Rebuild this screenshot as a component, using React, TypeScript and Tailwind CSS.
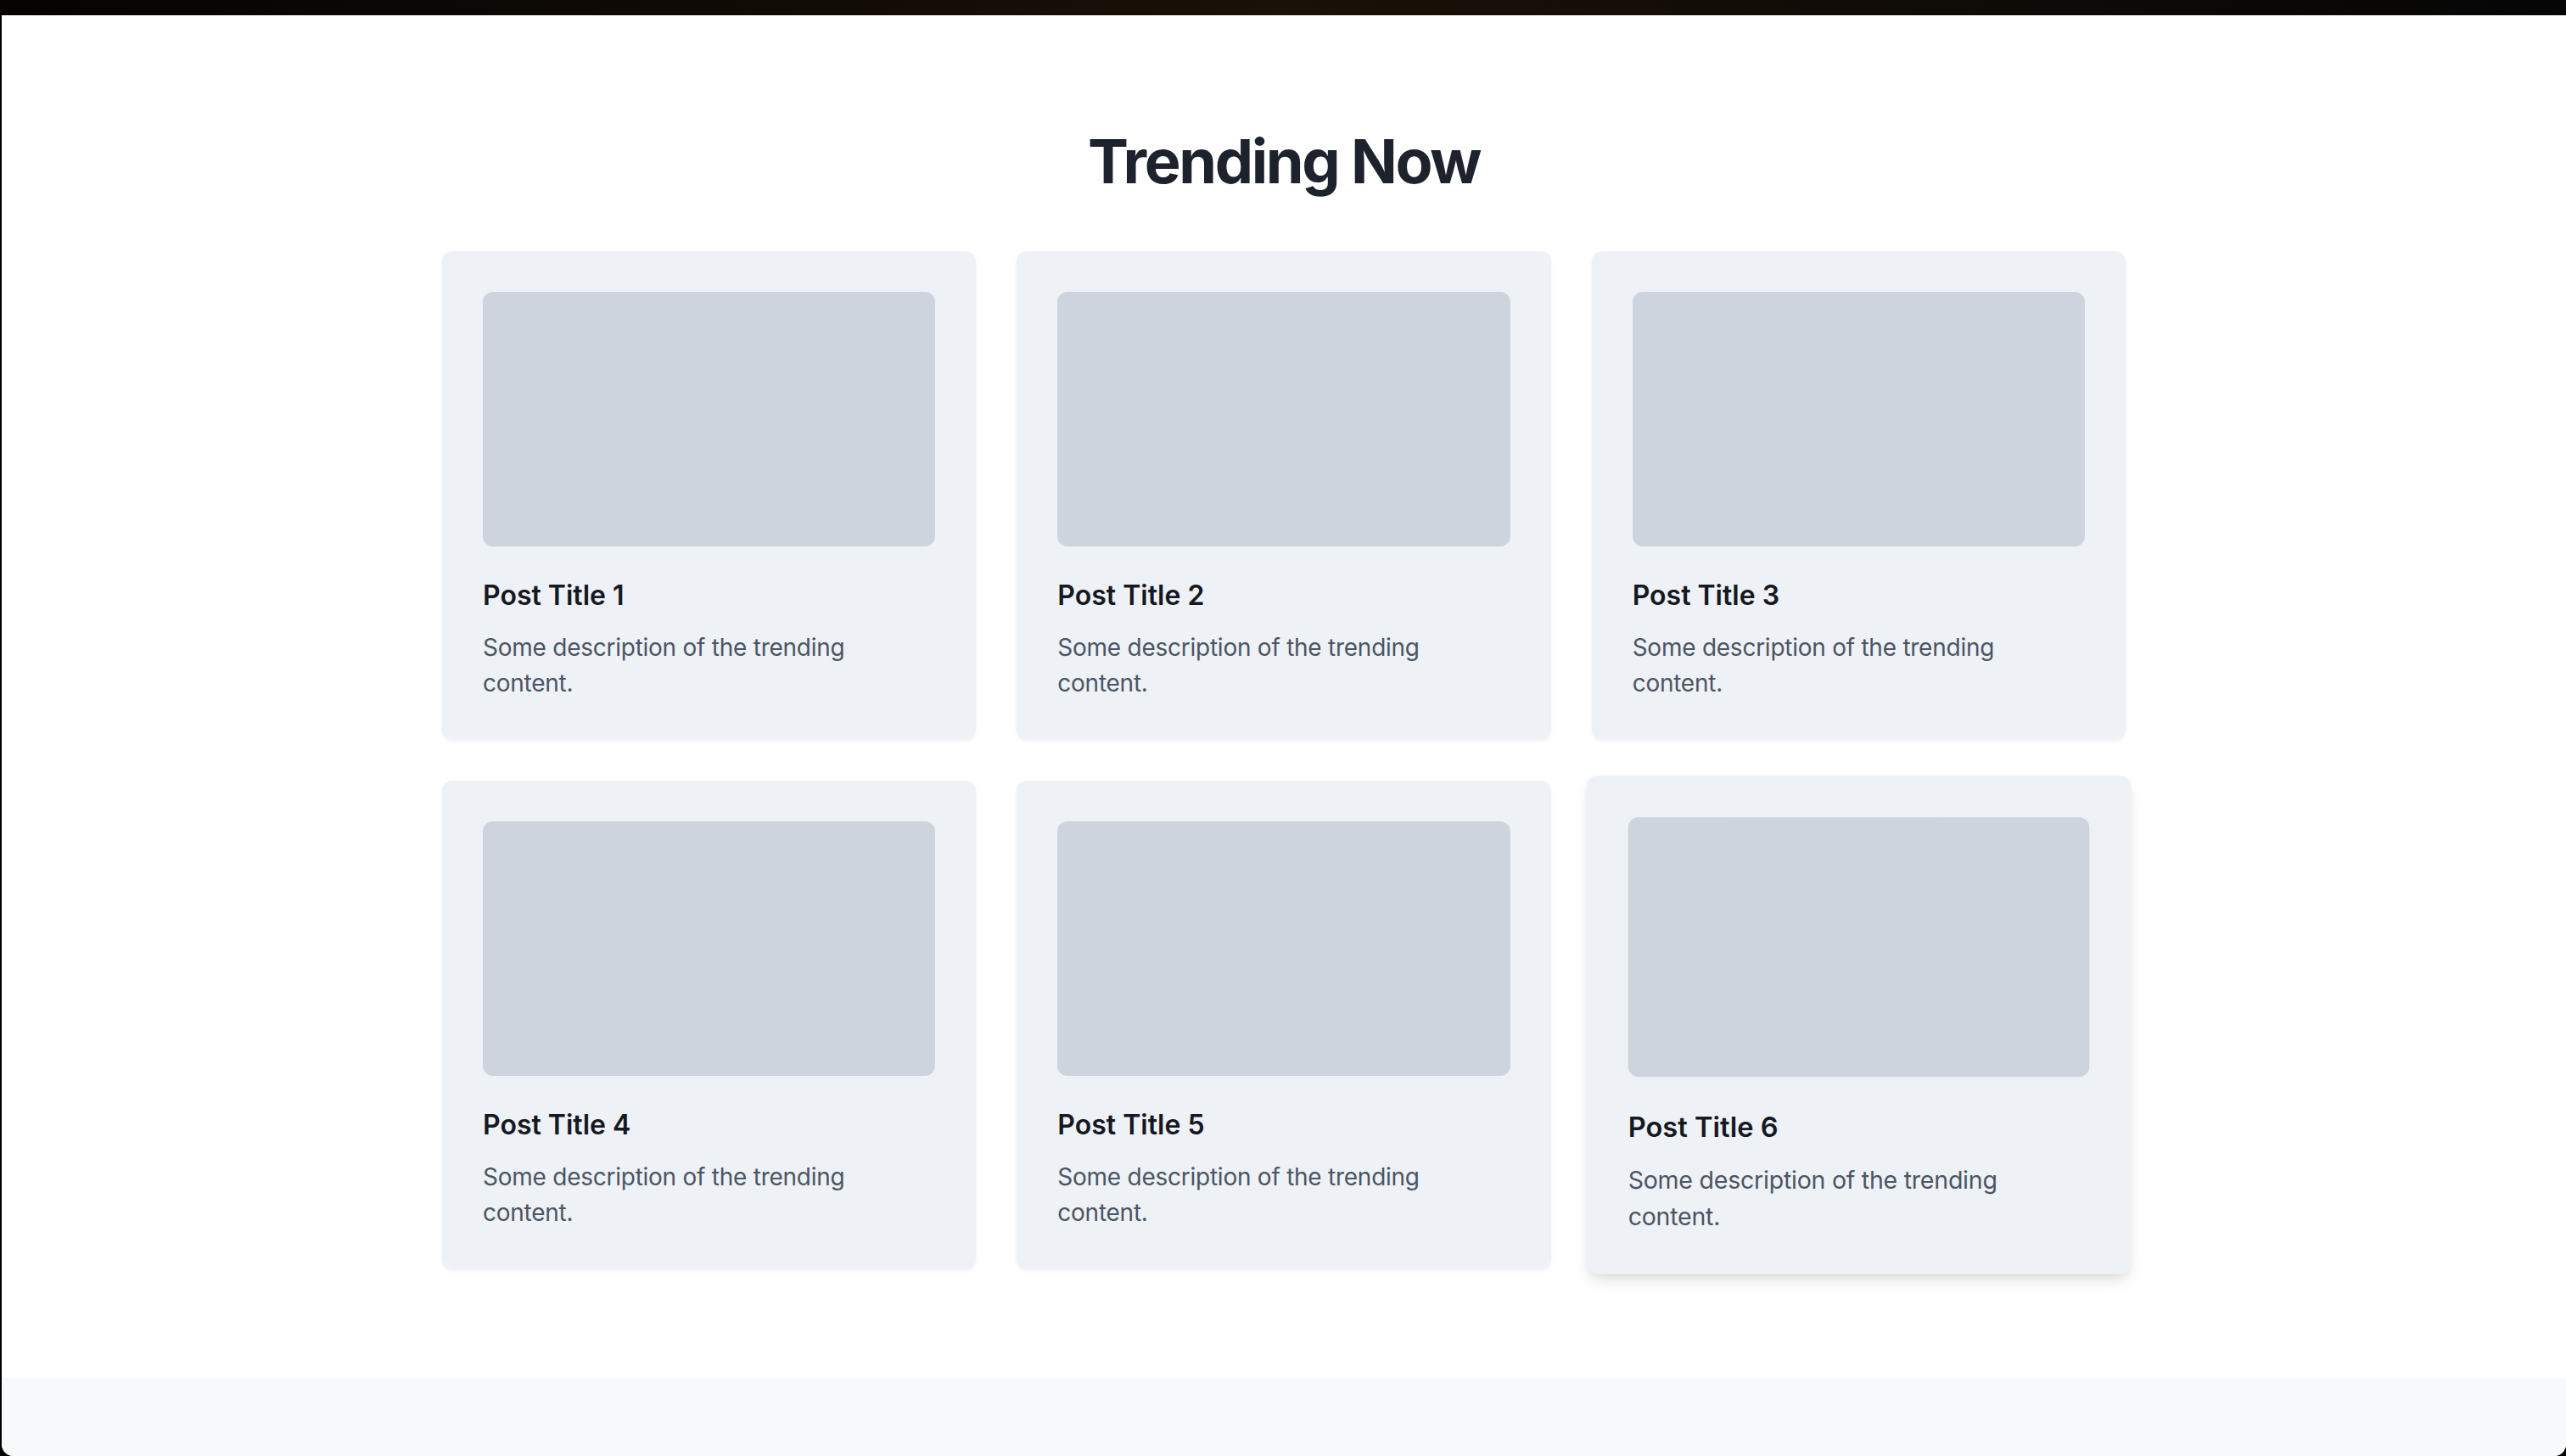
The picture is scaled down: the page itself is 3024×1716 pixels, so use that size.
import React from "react";

// Placeholder posts for the trending grid
const posts = Array.from({ length: 6 }, (_, i) => ({
  id: i + 1,
  title: `Post Title ${i + 1}`,
  description: "Some description of the trending content.",
}));

const PostCard = ({ title, description, hovered }: { title: string; description: string; hovered?: boolean }) => {
  return (
    <div
      className={
        hovered
          ? "relative z-10 scale-[1.02] rounded-xl bg-[#eef1f6] px-12 pt-12 pb-[46px] shadow-[0_10px_18px_-4px_rgba(0,0,0,0.12),0_4px_8px_-4px_rgba(0,0,0,0.08)]"
          : "rounded-xl bg-[#eef1f6] px-12 pt-12 pb-[46px] shadow-[0_2px_4px_rgba(0,0,0,0.05)]"
      }
    >
      <div className="aspect-video w-full rounded-xl bg-[#cdd4de]" />
      <h3 className="mt-[34px] text-[32px] leading-[48px] font-semibold text-[#161922]">{title}</h3>
      <p className="mt-4 text-[28px] leading-[42px] tracking-[-0.25px] text-[#4b5563]">{description}</p>
    </div>
  );
};

const App = () => {
  return (
    <div className="flex h-[1716px] flex-col overflow-hidden bg-black font-['Inter','Noto_Sans',sans-serif]">
      {/* dark strip of the desktop behind the window */}
      <div className="h-[18px] shrink-0 bg-linear-to-r from-[#050403] via-[#1a1107] to-[#060606]" />

      <div className="ml-[2px] flex flex-1 flex-col overflow-hidden rounded-b-[14px] bg-white">
        <section className="pt-[132px] pb-[128px]">
          <h2 className="mb-[66px] text-center text-[72px] leading-[80px] font-bold tracking-[-2.4px] text-[#1e222c]">
            Trending Now
          </h2>

          <div className="mx-auto max-w-[2048px] px-8">
            <div className="grid grid-cols-3 gap-12">
              {posts.map((post) => (
                <PostCard
                  key={post.id}
                  title={post.title}
                  description={post.description}
                  hovered={post.id === 6}
                />
              ))}
            </div>
          </div>
        </section>

        <div className="flex-1 bg-[#f8f9fb]" />
      </div>
    </div>
  );
};

export default App;
